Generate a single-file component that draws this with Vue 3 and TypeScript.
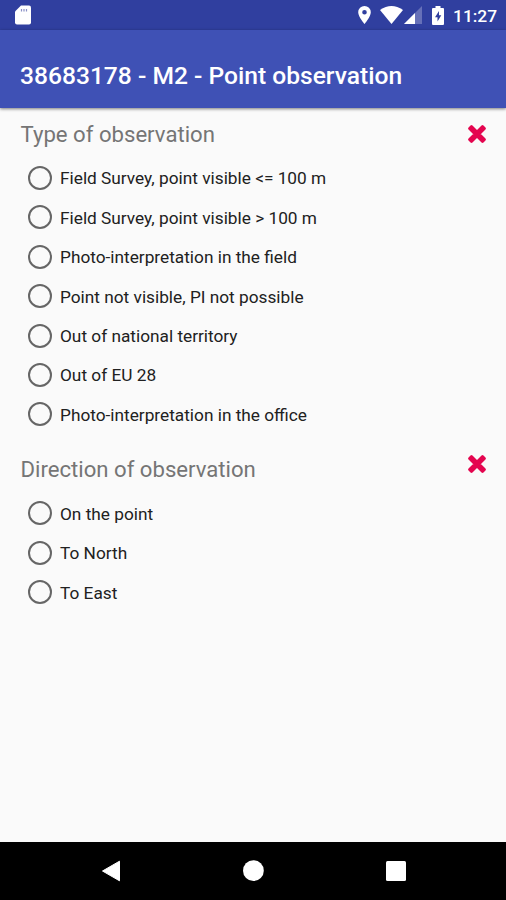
<script setup lang="ts">
interface Question {
  title: string
  options: string[]
}

const questions: Question[] = [
  {
    title: 'Type of observation',
    options: [
      'Field Survey, point visible <= 100 m',
      'Field Survey, point visible > 100 m',
      'Photo-interpretation in the field',
      'Point not visible, PI not possible',
      'Out of national territory',
      'Out of EU 28',
      'Photo-interpretation in the office',
    ],
  },
  {
    title: 'Direction of observation',
    options: ['On the point', 'To North', 'To East'],
  },
]
</script>

<template>
  <div class="screen">
    <header class="status-bar">
      <svg class="sd" width="16" height="20" viewBox="0 0 16 20">
        <path d="M6 .5h8q2 0 2 2v15q0 2-2 2H2q-2 0-2-2V6.500Z" fill="#fff" />
        <path d="M6.500 4v2.500M9 4v2.500M11.500 4v2.500" stroke="#8a90c6" stroke-width="1.200" />
      </svg>
      <svg class="pin" width="13" height="18" viewBox="0 0 13 18">
        <path fill-rule="evenodd" d="M6.500 0A6.300 6.300 0 0 0 .2 6.300C.2 11 6.500 18 6.500 18s6.300-7 6.300-11.700A6.300 6.300 0 0 0 6.500 0Zm0 4a2.300 2.300 0 1 1 0 4.600 2.300 2.300 0 0 1 0-4.600Z" fill="#fff" />
      </svg>
      <svg class="wifi" width="23" height="18" viewBox="0 0 23 18">
        <path d="M0 4Q11.500-4 23 4L11.500 18Z" fill="#fff" />
      </svg>
      <svg class="cell" width="18" height="18" viewBox="0 0 18 18">
        <path d="M18 0v18H0Z" fill="#6670b8" />
        <path d="M11 7V18H0Z" fill="#fff" />
      </svg>
      <svg class="battery" width="12" height="19" viewBox="0 0 12 19">
        <path d="M3.500 0h5v2H11q1 0 1 1v15q0 1-1 1H1q-1 0-1-1V3q0-1 1-1h2.500Z" fill="#fff" />
        <path d="M7 5 3 11.300h2.500V15.500l3.800-6.300H7Z" fill="#303f9f" />
      </svg>
      <span class="clock">11:27</span>
    </header>
    <div class="app-bar">
      <h1>38683178 - M2 - Point observation</h1>
    </div>
    <main class="content">
      <section v-for="q in questions" :key="q.title" class="question">
        <div class="heading">
          <h2>{{ q.title }}</h2>
          <svg class="clear" width="20" height="20" viewBox="0 0 20 20">
            <path d="M4.500 2.500 10 8l5.500-5.500 2 2L12 10l5.500 5.500-2 2L10 12l-5.500 5.500-2-2L8 10 2.500 4.500Z" fill="#e4054f" stroke="#e4054f" stroke-width="2.800" stroke-linejoin="round" />
          </svg>
        </div>
        <div class="options" role="radiogroup">
          <div v-for="option in q.options" :key="option" class="option" role="radio" aria-checked="false">
            <span class="ring"></span>
            <span class="label">{{ option }}</span>
          </div>
        </div>
      </section>
    </main>
    <nav class="nav-bar">
      <svg width="20" height="22" viewBox="0 0 20 22"><path d="M18.500 1.200v19.600L1.500 11Z" fill="#fff" stroke="#fff" stroke-linejoin="round" /></svg>
      <svg width="22" height="22" viewBox="0 0 22 22"><circle cx="10.400" cy="10.700" r="10.400" fill="#fff" /></svg>
      <svg width="20" height="20" viewBox="0 0 20 20"><rect width="20" height="20" rx="1.500" fill="#fff" /></svg>
    </nav>
  </div>
</template>

<style>
body {
  margin: 0;
}
</style>

<style scoped>
.screen {
  display: flex;
  flex-direction: column;
  width: 506px;
  height: 900px;
  overflow: hidden;
  background: #fafafa;
  font-family: Roboto, sans-serif;
}
svg {
  display: block;
  flex: none;
}
.status-bar {
  display: flex;
  align-items: center;
  height: 30px;
  flex: none;
  padding: 0 9px 0 15px;
  box-sizing: border-box;
  background: #303f9f;
}
.pin {
  margin-left: auto;
}
.wifi {
  margin-left: 9px;
}
.cell {
  margin-left: 1px;
}
.battery {
  margin-left: 10px;
}
.clock {
  width: 44px;
  margin-left: 9px;
  padding-top: 2px;
  font-size: 17.400px;
  font-weight: 500;
  line-height: 28px;
  color: #fff;
  white-space: nowrap;
}
.app-bar {
  display: flex;
  align-items: center;
  flex: none;
  height: 78px;
  box-sizing: border-box;
  padding: 13px 20px 0;
  background: #3f51b5;
  box-shadow: 0 1px 3px rgba(0, 0, 0, 0.5);
}
h1,
h2 {
  margin: 0;
  white-space: nowrap;
}
h1 {
  font-size: 24.600px;
  font-weight: 500;
  line-height: 30px;
  color: #fff;
}
.content {
  flex: 1;
}
.heading {
  display: flex;
  justify-content: space-between;
  height: 50.300px;
  box-sizing: border-box;
  padding: 12px 19px 0 20.500px;
}
.question + .question .heading {
  height: 59.500px;
  padding-top: 21px;
}
h2 {
  font-size: 22.150px;
  font-weight: 400;
  line-height: 28px;
  color: #757575;
}
.clear {
  margin-top: 3.500px;
}
.question + .question .clear {
  margin-top: -1px;
}
.option {
  display: flex;
  align-items: center;
  height: 39.400px;
  padding-left: 28px;
}
.ring {
  width: 24px;
  height: 24px;
  box-sizing: border-box;
  border: 2px solid #666;
  border-radius: 50%;
}
.label {
  padding: 1px 0 0 8px;
  font-size: 17.250px;
  line-height: 24px;
  color: #212121;
  white-space: nowrap;
}
.nav-bar {
  display: flex;
  align-items: center;
  justify-content: space-between;
  flex: none;
  height: 58.300px;
  padding: 0 100px 0 101px;
  box-sizing: border-box;
  background: #000;
}
</style>
